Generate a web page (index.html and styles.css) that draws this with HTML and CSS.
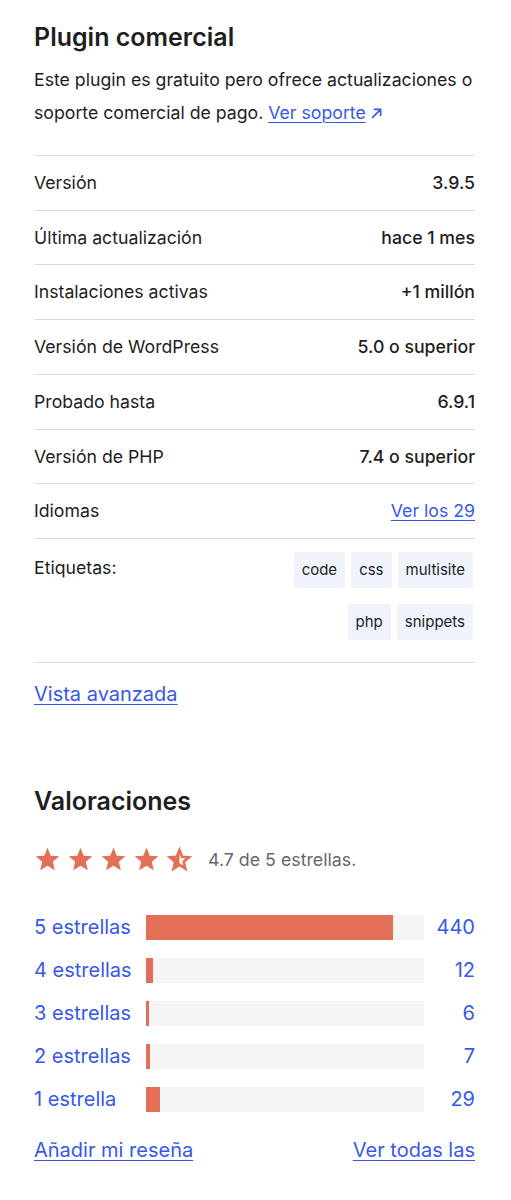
FILE: index.html
```html
<!DOCTYPE html>
<html lang="es">

<head>
  <meta charset="UTF-8">
  <meta name="viewport" content="width=device-width, initial-scale=1.0">
  <title>Plugin comercial</title>
  <link rel="stylesheet" href="styles.css">
</head>

<body>
  <div class="sidebar">
    <section class="commercial">
      <h2>Plugin comercial</h2>
      <p class="intro">Este plugin es gratuito pero ofrece actualizaciones o soporte comercial de pago. <a href="#">Ver soporte</a><svg class="ext" viewBox="0 0 12 12" width="13" height="13"><path d="M2 10 L9.8 2.2 M3.4 2.2 H9.8 V8.6" fill="none" stroke="#3858e9" stroke-width="1.5"/></svg></p>
    </section>

    <ul class="meta">
      <li><span class="label">Versión</span><strong>3.9.5</strong></li>
      <li><span class="label">Última actualización</span><strong>hace 1 mes</strong></li>
      <li><span class="label">Instalaciones activas</span><strong>+1 millón</strong></li>
      <li><span class="label">Versión de WordPress</span><strong>5.0 o superior</strong></li>
      <li><span class="label">Probado hasta</span><strong>6.9.1</strong></li>
      <li><span class="label">Versión de PHP</span><strong>7.4 o superior</strong></li>
      <li><span class="label">Idiomas</span><a href="#">Ver los 29</a></li>
      <li class="tags-row">
        <span class="label">Etiquetas:</span>
        <div class="tags">
          <a href="#">code</a>
          <a href="#">css</a>
          <a href="#">multisite</a>
          <a href="#">php</a>
          <a href="#">snippets</a>
        </div>
      </li>
    </ul>

    <a class="advanced" href="#">Vista avanzada</a>

    <section class="ratings">
      <h2>Valoraciones</h2>
      <div class="stars-line">
        <div class="stars">
          <svg viewBox="0 0 24 24" width="27" height="27"><path class="star" d="M12 1.5 L14.9 8.6 L22.5 9.2 L16.7 14.1 L18.5 21.6 L12 17.6 L5.5 21.6 L7.3 14.1 L1.5 9.2 L9.1 8.6 Z"/></svg>
          <svg viewBox="0 0 24 24" width="27" height="27"><path class="star" d="M12 1.5 L14.9 8.6 L22.5 9.2 L16.7 14.1 L18.5 21.6 L12 17.6 L5.5 21.6 L7.3 14.1 L1.5 9.2 L9.1 8.6 Z"/></svg>
          <svg viewBox="0 0 24 24" width="27" height="27"><path class="star" d="M12 1.5 L14.9 8.6 L22.5 9.2 L16.7 14.1 L18.5 21.6 L12 17.6 L5.5 21.6 L7.3 14.1 L1.5 9.2 L9.1 8.6 Z"/></svg>
          <svg viewBox="0 0 24 24" width="27" height="27"><path class="star" d="M12 1.5 L14.9 8.6 L22.5 9.2 L16.7 14.1 L18.5 21.6 L12 17.6 L5.5 21.6 L7.3 14.1 L1.5 9.2 L9.1 8.6 Z"/></svg>
          <svg viewBox="0 0 24 24" width="27" height="27"><path class="star-half" d="M12 3.8 L14.3 9.6 L20.4 10.1 L15.7 14 L17.2 20 L12 16.8 L6.8 20 L8.3 14 L3.6 10.1 L9.7 9.6 Z"/><path class="star" d="M12 1.5 L12 17.6 L5.5 21.6 L7.3 14.1 L1.5 9.2 L9.1 8.6 Z"/></svg>
        </div>
        <span class="score">4.7 de 5 estrellas.</span>
      </div>

      <ul class="bars">
        <li><a href="#">5 estrellas</a><span class="bar"><span class="fill" style="width: 89%"></span></span><a class="count" href="#">440</a></li>
        <li><a href="#">4 estrellas</a><span class="bar"><span class="fill" style="width: 2.4%"></span></span><a class="count" href="#">12</a></li>
        <li><a href="#">3 estrellas</a><span class="bar"><span class="fill" style="width: 1.2%"></span></span><a class="count" href="#">6</a></li>
        <li><a href="#">2 estrellas</a><span class="bar"><span class="fill" style="width: 1.4%"></span></span><a class="count" href="#">7</a></li>
        <li><a href="#">1 estrella</a><span class="bar"><span class="fill" style="width: 5.1%"></span></span><a class="count" href="#">29</a></li>
      </ul>

      <div class="review-links">
        <a href="#">Añadir mi reseña</a>
        <a href="#">Ver todas las</a>
      </div>
    </section>
  </div>
</body>

</html>
```

FILE: styles.css
```css
body {
  margin: 0;
  font-family: Inter, "Noto Sans", Arial, sans-serif;
  color: #1e1e1e;
  background-color: #fff;
}

a {
  color: #3858e9;
  text-decoration: underline;
  text-underline-offset: 3px;
  text-decoration-thickness: 1px;
}

.sidebar {
  padding: 20px 36px 40px 34px;
}

h2 {
  margin: 0;
  font-size: 25px;
  font-weight: 600;
  line-height: 34px;
}

.intro {
  margin: 9px 0 26px;
  font-size: 17.7px;
  line-height: 33px;
}

.ext {
  margin-left: 4px;
  vertical-align: -1px;
}

.meta {
  list-style: none;
  margin: 0;
  padding: 0;
  border-bottom: 1px solid #dcdcde;
}

.meta li {
  display: flex;
  justify-content: space-between;
  align-items: center;
  border-top: 1px solid #dcdcde;
  padding: 15px 0;
  font-size: 17.7px;
  line-height: 23.7px;
}

.meta strong {
  font-weight: 500;
}

.meta li.tags-row {
  align-items: flex-start;
  padding: 13px 0 22px;
}

.tags-row .label {
  padding-top: 4px;
}

.tags {
  display: flex;
  flex-wrap: wrap;
  justify-content: flex-end;
  gap: 16px 6px;
  width: 190px;
  margin-right: 2px;
}

.tags a {
  display: block;
  height: 36px;
  line-height: 36px;
  padding: 0 8px;
  font-size: 15px;
  color: #1e1e1e;
  text-decoration: none;
  background-color: #f0f3fc;
  border-radius: 2px;
}

.advanced {
  display: inline-block;
  margin-top: 18px;
  font-size: 20px;
  line-height: 26px;
}

.ratings {
  margin-top: 77px;
}

.stars-line {
  display: flex;
  align-items: center;
  margin-top: 28px;
}

.stars {
  display: flex;
  gap: 6px;
}

.stars svg {
  display: block;
}

.star {
  fill: #e26f56;
}

.star-half {
  fill: none;
  stroke: #e26f56;
  stroke-width: 2.4;
  stroke-linejoin: miter;
}

.score {
  margin-left: 15px;
  font-size: 17.8px;
  color: #646970;
}

.bars {
  list-style: none;
  margin: 33px 0 0;
  padding: 0;
}

.bars li {
  display: grid;
  grid-template-columns: 112px 1fr 51px;
  align-items: center;
  height: 43px;
  font-size: 20px;
}

.bars a {
  text-decoration: none;
}

.bars .count {
  text-align: right;
}

.bar {
  display: block;
  height: 25px;
  background-color: #f5f5f5;
}

.fill {
  display: block;
  height: 100%;
  min-width: 2px;
  background-color: #e26f56;
}

.review-links {
  display: flex;
  justify-content: space-between;
  margin-top: 17px;
  font-size: 20px;
}
```
